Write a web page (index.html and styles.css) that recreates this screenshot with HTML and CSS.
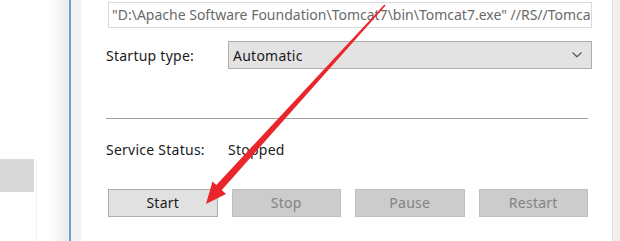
FILE: index.html
```html
<!DOCTYPE html>
<html>
<head>
<meta charset="utf-8">
<link rel="stylesheet" href="styles.css">
</head>
<body>
<div class="screen">
  <div class="side">
    <div class="side-inner"><div class="tile"></div></div>
  </div>
  <div class="frame-line"></div>
  <div class="window">
    <div class="cmd">"D:\Apache Software Foundation\Tomcat7\bin\Tomcat7.exe" //RS//Tomcat7</div>
    <div class="row startup">
      <span class="label">Startup type:</span>
      <div class="select"><span>Automatic</span>
        <svg class="chev" width="12" height="8" viewBox="0 0 12 8"><path d="M1.5 1.5 L6 5.8 L10.5 1.5" fill="none" stroke="#606060" stroke-width="1.3"/></svg>
      </div>
    </div>
    <div class="sep"></div>
    <div class="row status">
      <span class="label">Service Status:</span>
      <span class="value">Stopped</span>
    </div>
    <div class="buttons">
      <div class="btn">Start</div>
      <div class="btn disabled">Stop</div>
      <div class="btn disabled">Pause</div>
      <div class="btn disabled">Restart</div>
    </div>
  </div>
  <div class="rborder"></div>
</div>
<svg class="arrow" width="620" height="241" viewBox="0 0 620 241">
  <polygon points="384.4,4.6 385.6,5.4 219.8,192.3 214.2,187.2" fill="#e8262b"/>
  <polygon points="206,204 212.5,181.5 226,194" fill="#e8262b"/>
</svg>
</body>
</html>
```
FILE: styles.css
```css
html, body {
  margin: 0;
  padding: 0;
  background: #fff;
}
body {
  width: 620px;
  height: 241px;
  overflow: hidden;
  position: relative;
  font-family: "Noto Sans", "Open Sans", sans-serif;
  font-size: 14px;
  letter-spacing: 0.25px;
  color: #1a1a1a;
}
.screen {
  display: flex;
  width: 620px;
  height: 241px;
  overflow: hidden;
}
.side {
  width: 69px;
  flex: none;
  background: linear-gradient(to right, #fff 0, #fff 50px, #ebebeb 69px);
}
.side-inner {
  width: 37px;
  height: 100%;
  border-right: 1px solid #f2f2f2;
  background: #fff;
  box-sizing: border-box;
}
.tile {
  margin-top: 159px;
  width: 34px;
  height: 33px;
  background: #d9d9d9;
}
.frame-line {
  width: 2px;
  flex: none;
  background: #6f9fd6;
}
.window {
  flex: 1;
  min-width: 0;
  padding: 2px 20px 0 35px;
  background: linear-gradient(to right, #f3f3f3 0, #f3f3f3 10px, #fff 11px);
  display: flex;
  flex-direction: column;
}
.cmd {
  margin-left: 2px;
  height: 26px;
  flex: none;
  box-sizing: border-box;
  border: 1px solid #d9d9d9;
  padding-left: 3px;
  line-height: 24px;
  letter-spacing: 0;
  color: #6a6a6a;
  white-space: nowrap;
  overflow: hidden;
  background: #fff;
}
.row {
  display: flex;
  align-items: center;
  flex: none;
}
.label {
  width: 122px;
  flex: none;
}
.startup {
  margin-top: 13px;
  height: 28px;
}
.select {
  flex: 1;
  height: 28px;
  box-sizing: border-box;
  border: 1px solid #adadad;
  background: #e3e3e3;
  display: flex;
  align-items: center;
  justify-content: space-between;
  padding: 0 8px 0 4px;
}
.chev {
  display: block;
}
.sep {
  margin-top: 49px;
  margin-right: 4px;
  height: 1px;
  flex: none;
  background: #a0a0a0;
}
.status {
  margin-top: 21px;
  height: 18px;
}
.buttons {
  margin-top: 31px;
  margin-left: 2px;
  width: 480px;
  flex: none;
  display: grid;
  grid-template-columns: repeat(4, 1fr);
  column-gap: 14px;
}
.btn {
  height: 28px;
  box-sizing: border-box;
  border: 1px solid #adadad;
  background: #e1e1e1;
  text-align: center;
  line-height: 26px;
}
.btn.disabled {
  border-color: #bfbfbf;
  background: #cccccc;
  color: #838383;
}
.rborder {
  width: 8px;
  flex: none;
  box-sizing: border-box;
  border-left: 1px solid #e2e2e2;
  background: #f0f0f0;
}
.arrow {
  position: absolute;
  left: 0;
  top: 0;
  display: block;
  pointer-events: none;
}
```
